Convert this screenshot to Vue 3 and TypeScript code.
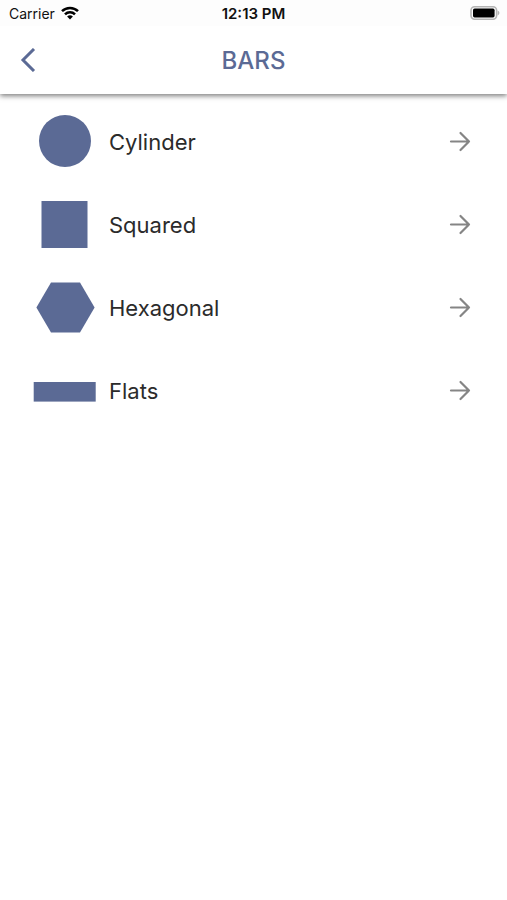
<script setup lang="ts">
type Shape = 'cylinder' | 'squared' | 'hexagonal' | 'flats'

interface Bar {
  shape: Shape
  label: string
}

const bars: Bar[] = [
  { shape: 'cylinder', label: 'Cylinder' },
  { shape: 'squared', label: 'Squared' },
  { shape: 'hexagonal', label: 'Hexagonal' },
  { shape: 'flats', label: 'Flats' },
]
</script>

<template>
  <div class="screen">
    <div class="status">
      <div class="carrier">
        <span>Carrier</span>
        <svg class="wifi" viewBox="0 0 18 14" aria-hidden="true">
          <path d="M1 5.2a11.3 11.3 0 0 1 16 0" />
          <path d="M4 8.3a7 7 0 0 1 10 0" />
          <path class="dot" d="M9 13.6L6.1 10.6a4.1 4.1 0 0 1 5.8 0z" />
        </svg>
      </div>
      <span class="time">12:13 PM</span>
      <svg class="battery" viewBox="0 0 30 14" aria-hidden="true">
        <rect class="case" x="1" y="0.8" width="25.6" height="12.4" rx="3.6" />
        <rect x="3" y="2.6" width="21.6" height="8.8" rx="1.6" />
        <path class="cap" d="M27.6 4.6c2.400 .8 2.400 4 0 4.800z" />
      </svg>
    </div>
    <header class="bar">
      <button class="back" type="button" aria-label="Back">
        <svg viewBox="0 0 16 24" aria-hidden="true"><path d="M14 1L3 12l11 11" /></svg>
      </button>
      <h1>BARS</h1>
    </header>
    <main>
      <ul class="list">
        <li v-for="bar in bars" :key="bar.shape">
          <a class="row" :href="`#${bar.shape}`">
            <svg class="shape" viewBox="0 0 64 64" aria-hidden="true">
              <circle v-if="bar.shape === 'cylinder'" cx="32" cy="31" r="26" />
              <rect v-else-if="bar.shape === 'squared'" x="8.5" y="8" width="46" height="47" />
              <path v-else-if="bar.shape === 'hexagonal'" d="M18 6.400h29L61.600 31.600 47 56.600H18L3.400 31.600z" />
              <rect v-else x="0.7" y="23" width="62" height="19.6" />
            </svg>
            <span class="label">{{ bar.label }}</span>
            <svg class="arrow" viewBox="0 0 22 22" aria-hidden="true"><path d="M2 10.500h18M11.500 2l8.500 8.500-8.500 8.500" /></svg>
          </a>
        </li>
      </ul>
    </main>
  </div>
</template>

<style>
body {
  background: #fff;
}
</style>

<style scoped>
.screen {
  font-family: Inter, "Liberation Sans", sans-serif;
  color: #2b2b2b;
}
.status {
  display: grid;
  grid-template-columns: 1fr auto 1fr;
  align-items: center;
  height: 26px;
  padding: 0 7px;
  font-size: 14px;
  color: #111;
  background: #fdfdfd;
}
.carrier {
  display: flex;
  align-items: center;
  gap: 6px;
  padding-left: 2px;
}
.wifi {
  width: 18px;
  height: 14px;
  fill: none;
  stroke: #000;
  stroke-width: 2.5;
}
.wifi .dot {
  fill: #000;
  stroke: none;
}
.time {
  font-size: 15px;
  font-weight: 600;
}
.battery {
  justify-self: end;
  width: 30px;
  height: 14px;
}
.battery .case {
  fill: none;
  stroke: #b4b4b4;
  stroke-width: 1.6;
}
.battery .cap {
  fill: #b4b4b4;
}
.bar {
  display: grid;
  grid-template-columns: 56px 1fr 56px;
  align-items: center;
  height: 68px;
  box-shadow: 0 2px 5px rgba(0, 0, 0, 0.5);
  clip-path: inset(0 0 -10px 0);
}
.back {
  display: flex;
  align-items: center;
  justify-content: center;
  height: 48px;
  padding: 0;
  border: 0;
  background: none;
}
.back svg {
  width: 16px;
  height: 24px;
  fill: none;
  stroke: #5b6a95;
  stroke-width: 3;
}
h1 {
  margin: 0;
  text-align: center;
  font-size: 24px;
  font-weight: 500;
  color: #5b6a95;
}
.list {
  margin: 0;
  padding: 6px 0;
  list-style: none;
}
.row {
  display: flex;
  align-items: center;
  gap: 12px;
  height: 83px;
  padding: 0 36px 0 33px;
  color: inherit;
  text-decoration: none;
}
.shape {
  width: 64px;
  height: 64px;
  fill: #5b6a95;
}
.label {
  flex: 1;
  font-size: 22px;
}
.arrow {
  width: 22px;
  height: 22px;
  fill: none;
  stroke: #858585;
  stroke-width: 2.2;
  stroke-linecap: round;
  stroke-linejoin: round;
}
</style>
